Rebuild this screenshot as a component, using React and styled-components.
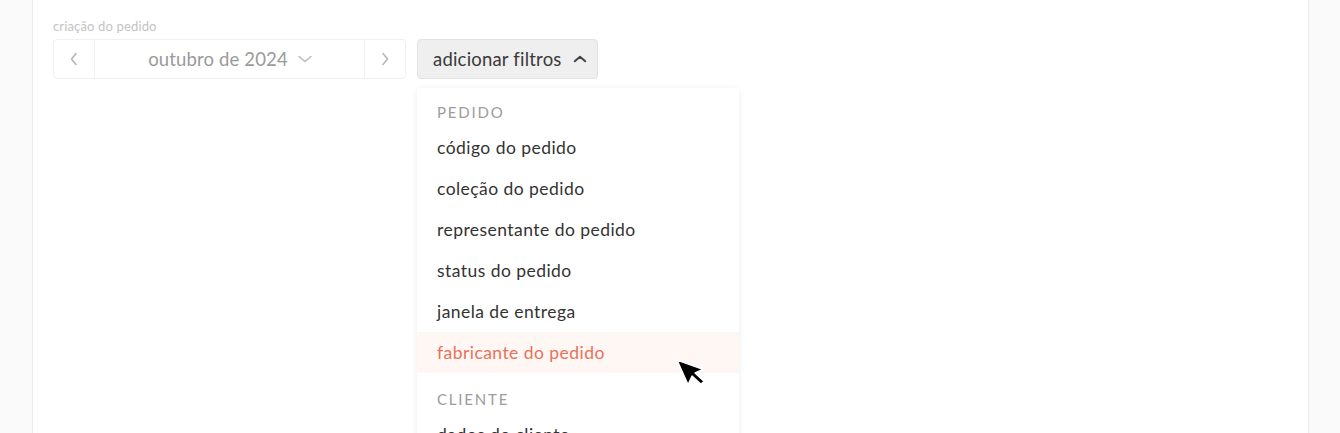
import React from "react";
import styled, { createGlobalStyle } from "styled-components";

const Global = createGlobalStyle`
  html, body {
    margin: 0;
    padding: 0;
    height: 100%;
    background: #fafafa;
    font-family: Lato, "Open Sans", sans-serif;
    overflow: hidden;
  }
  #root { height: 100%; }
`;

const Page = styled.div`
  height: 433px;
  padding-left: 32px;
  display: flex;
  overflow: hidden;
`;

const Panel = styled.div`
  width: 1277px;
  height: 100%;
  background: #fff;
  border-left: 1px solid #ececec;
  border-right: 1px solid #ececec;
  padding: 18px 20px 0;
  box-sizing: border-box;
`;

const Label = styled.div`
  font-size: 13px;
  letter-spacing: 0.15px;
  color: #c4c4c4;
  line-height: 16px;
  margin-bottom: 5px;
`;

const Row = styled.div`
  display: flex;
  gap: 11px;
  align-items: flex-start;
`;

const MonthPicker = styled.div`
  display: flex;
  width: 353px;
  height: 40px;
  border: 1px solid #f0f0f0;
  border-radius: 4px;
  box-sizing: border-box;
`;

const ArrowButton = styled.div`
  width: 40px;
  display: flex;
  align-items: center;
  justify-content: center;
  color: #b5b5b5;
  border-${(p) => (p.side === "left" ? "right" : "left")}: 1px solid #f0f0f0;
`;

const Month = styled.div`
  flex: 1;
  display: flex;
  align-items: center;
  justify-content: center;
  gap: 9px;
  font-size: 18.5px;
  letter-spacing: 0.15px;
  color: #9a9a9a;
  padding-left: 2px;
`;

const FilterButton = styled.div`
  height: 40px;
  box-sizing: border-box;
  padding: 0 10px 0 15px;
  display: flex;
  align-items: center;
  gap: 11px;
  background: #efefef;
  border: 1px solid #e2e2e2;
  border-radius: 4px;
  font-size: 18.5px;
  letter-spacing: 0.2px;
  color: #3a3a3a;
`;

const FilterWrap = styled.div`
  position: relative;
`;

const Menu = styled.div`
  position: absolute;
  top: 49px;
  left: 0;
  width: 322px;
  background: #fff;
  box-shadow: 0 1px 6px rgba(0, 0, 0, 0.08);
  border-radius: 3px;
  padding-top: 12px;
  z-index: 5;
`;

const Section = styled.div`
  font-size: 15px;
  letter-spacing: 1.8px;
  color: #9c9c9c;
  padding: 0 20px;
  height: 24px;
  line-height: 24px;
  margin-bottom: 3px;
  margin-top: ${(p) => (p.first ? "0" : "14px")};
`;

const Item = styled.div`
  font-size: 17.5px;
  letter-spacing: 0.45px;
  height: 41px;
  line-height: 41px;
  padding: 0 20px;
  color: ${(p) => (p.active ? "#e8715a" : "#333")};
  background: ${(p) => (p.active ? "#fff7f4" : "transparent")};
  position: relative;
`;

const Cursor = styled.svg`
  position: absolute;
  left: 257px;
  top: 25px;
`;

const Chevron = ({ dir, size = 16, color = "currentColor", w = 2 }) => {
  const paths = {
    left: "M10 2.5 L5.5 8 L10 13.5",
    right: "M6 2.5 L10.5 8 L6 13.5",
    down: "M2 5.5 L8 10.5 L14 5.5",
    up: "M2 10.5 L8 5.5 L14 10.5",
  };
  return (
    <svg width={size} height={size} viewBox="0 0 16 16" fill="none">
      <path d={paths[dir]} stroke={color} strokeWidth={w} strokeLinecap="round" strokeLinejoin="round" />
    </svg>
  );
};

const groups = [
  {
    title: "PEDIDO",
    items: [
      "código do pedido",
      "coleção do pedido",
      "representante do pedido",
      "status do pedido",
      "janela de entrega",
      "fabricante do pedido",
    ],
  },
  { title: "CLIENTE", items: ["dados do cliente"] },
];

export default function App() {
  return (
    <>
      <Global />
      <Page>
        <Panel>
          <Label>criação do pedido</Label>
          <Row>
            <MonthPicker>
              <ArrowButton side="left">
                <Chevron dir="left" w={1.6} />
              </ArrowButton>
              <Month>
                outubro de 2024
                <Chevron dir="down" color="#bbb" w={1.6} />
              </Month>
              <ArrowButton side="right">
                <Chevron dir="right" w={1.6} />
              </ArrowButton>
            </MonthPicker>
            <FilterWrap>
              <FilterButton>
                adicionar filtros
                <Chevron dir="up" size={14} color="#444" w={2.4} />
              </FilterButton>
              <Menu>
                {groups.map((g, gi) => (
                  <div key={g.title}>
                    <Section first={gi === 0}>{g.title}</Section>
                    {g.items.map((it) => (
                      <Item key={it} active={it === "fabricante do pedido"}>
                        {it}
                        {it === "fabricante do pedido" && (
                          <Cursor width="34" height="36" viewBox="0 0 34 36">
                            <path
                              d="M0 0 L0 17 L4.5 13 L7.5 20 L10 19 L7 12 L12.5 12 Z"
                              fill="#000"
                              stroke="#fff"
                              strokeWidth="0.9"
                              strokeLinejoin="round"
                              transform="translate(3 3) rotate(-24) scale(1.6)"
                            />
                          </Cursor>
                        )}
                      </Item>
                    ))}
                  </div>
                ))}
              </Menu>
            </FilterWrap>
          </Row>
        </Panel>
      </Page>
    </>
  );
}
